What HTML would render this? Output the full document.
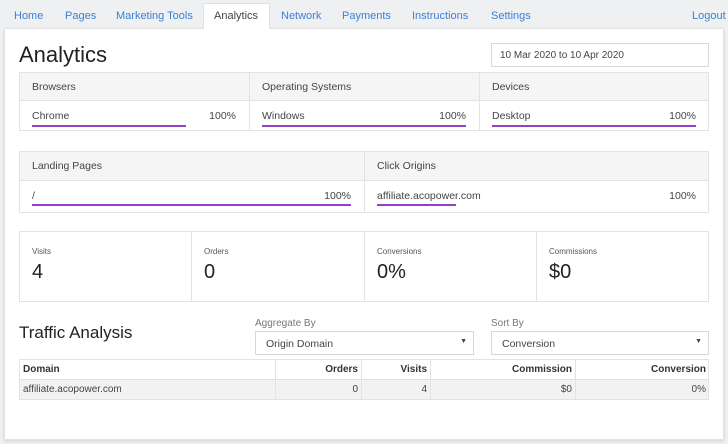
<!DOCTYPE html>
<html><head><style>
*{box-sizing:border-box;margin:0;padding:0}
body{width:728px;height:444px;background:#eef0f2;font-family:"Liberation Sans",sans-serif;color:#333;position:relative;overflow:hidden;font-size:11px}
.a{position:absolute}
.nav{color:#3d7fd6;font-size:11px;top:10px}
.card{left:4px;top:28px;width:720px;height:412px;background:#fff;border:1px solid #e2e2e2;box-shadow:0 1px 3px rgba(0,0,0,.12)}
.box{border:1px solid #e3e3e3;background:#fff}
.hd{background:#f5f5f5;border-bottom:1px solid #e3e3e3}
.vl{width:1px;background:#e3e3e3}
.bar{height:2px;background:#9640c9}
.t{font-size:10.5px;color:#444}
.sl{font-size:8px;color:#555}
.big{font-size:20px;color:#222}
.sel{border:1px solid #d8d8d8;background:#fff;font-size:10.5px;color:#444;padding:6px 10px}
.th{font-weight:bold;font-size:10px;color:#333}
.tr{text-align:right}
</style></head><body>
<div class="a" style="left:203px;top:3px;width:67px;height:26px;background:#fff;border:1px solid #e2e2e2;border-bottom:none;z-index:2"></div>
<div class="a nav" style="left:14px">Home</div>
<div class="a nav" style="left:65px">Pages</div>
<div class="a nav" style="left:116px">Marketing Tools</div>
<div class="a nav" style="left:214px;color:#444;z-index:3">Analytics</div>
<div class="a nav" style="left:281px">Network</div>
<div class="a nav" style="left:342px">Payments</div>
<div class="a nav" style="left:412px">Instructions</div>
<div class="a nav" style="left:491px">Settings</div>
<div class="a nav" style="left:692px">Logout</div>
<div class="a card"></div>
<div class="a" style="left:19px;top:42px;font-size:22px;color:#222">Analytics</div>
<div class="a sel" style="left:491px;top:43px;width:218px;height:24px;padding:6px 8px;font-size:10px">10 Mar 2020 to 10 Apr 2020</div>

<div class="a box" style="left:19px;top:72px;width:690px;height:59px"></div>
<div class="a hd" style="left:20px;top:73px;width:688px;height:28px"></div>
<div class="a vl" style="left:249px;top:73px;height:57px"></div>
<div class="a vl" style="left:479px;top:73px;height:57px"></div>
<div class="a t" style="left:32px;top:81px">Browsers</div>
<div class="a t" style="left:262px;top:81px">Operating Systems</div>
<div class="a t" style="left:492px;top:81px">Devices</div>
<div class="a t" style="left:32px;top:110px">Chrome</div><div class="a t tr" style="left:186px;width:50px;top:110px">100%</div>
<div class="a t" style="left:262px;top:110px">Windows</div><div class="a t tr" style="left:416px;width:50px;top:110px">100%</div>
<div class="a t" style="left:492px;top:110px">Desktop</div><div class="a t tr" style="left:646px;width:50px;top:110px">100%</div>
<div class="a bar" style="left:32px;top:125px;width:154px"></div>
<div class="a bar" style="left:262px;top:125px;width:204px"></div>
<div class="a bar" style="left:492px;top:125px;width:204px"></div>

<div class="a box" style="left:19px;top:151px;width:690px;height:62px"></div>
<div class="a hd" style="left:20px;top:152px;width:688px;height:29px"></div>
<div class="a vl" style="left:364px;top:152px;height:60px"></div>
<div class="a t" style="left:32px;top:160px">Landing Pages</div>
<div class="a t" style="left:377px;top:160px">Click Origins</div>
<div class="a t" style="left:32px;top:190px">/</div><div class="a t tr" style="left:301px;width:50px;top:190px">100%</div>
<div class="a t" style="left:377px;top:190px">affiliate.acopower.com</div><div class="a t tr" style="left:646px;width:50px;top:190px">100%</div>
<div class="a bar" style="left:32px;top:204px;width:319px"></div>
<div class="a bar" style="left:377px;top:204px;width:79px"></div>

<div class="a box" style="left:19px;top:231px;width:690px;height:71px"></div>
<div class="a vl" style="left:191px;top:232px;height:69px"></div>
<div class="a vl" style="left:364px;top:232px;height:69px"></div>
<div class="a vl" style="left:536px;top:232px;height:69px"></div>
<div class="a sl" style="left:32px;top:247px">Visits</div><div class="a big" style="left:32px;top:261px">4</div>
<div class="a sl" style="left:204px;top:247px">Orders</div><div class="a big" style="left:204px;top:261px">0</div>
<div class="a sl" style="left:377px;top:247px">Conversions</div><div class="a big" style="left:377px;top:261px">0%</div>
<div class="a sl" style="left:549px;top:247px">Commissions</div><div class="a big" style="left:549px;top:261px">$0</div>

<div class="a" style="left:19px;top:323px;font-size:17px;color:#222">Traffic Analysis</div>
<div class="a" style="left:255px;top:318px;font-size:10px;color:#777">Aggregate By</div>
<div class="a sel" style="left:255px;top:331px;width:219px;height:24px">Origin Domain<span style="position:absolute;right:6px;top:6px;font-size:7px">▼</span></div>
<div class="a" style="left:491px;top:318px;font-size:10px;color:#777">Sort By</div>
<div class="a sel" style="left:491px;top:331px;width:218px;height:24px">Conversion<span style="position:absolute;right:6px;top:6px;font-size:7px">▼</span></div>

<div class="a" style="left:19px;top:359px;width:690px;height:41px;border:1px solid #e3e3e3"></div>
<div class="a" style="left:20px;top:379px;width:688px;height:20px;background:#f2f2f2;border-top:1px solid #e0e0e0"></div>
<div class="a vl" style="left:275px;top:360px;height:39px"></div>
<div class="a vl" style="left:361px;top:360px;height:39px"></div>
<div class="a vl" style="left:430px;top:360px;height:39px"></div>
<div class="a vl" style="left:575px;top:360px;height:39px"></div>
<div class="a th" style="left:23px;top:364px">Domain</div>
<div class="a th tr" style="left:276px;width:82px;top:364px">Orders</div>
<div class="a th tr" style="left:362px;width:65px;top:364px">Visits</div>
<div class="a th tr" style="left:431px;width:141px;top:364px">Commission</div>
<div class="a th tr" style="left:576px;width:130px;top:364px">Conversion</div>
<div class="a t" style="left:23px;top:384px;font-size:10px">affiliate.acopower.com</div>
<div class="a t tr" style="left:276px;width:82px;top:384px;font-size:10px">0</div>
<div class="a t tr" style="left:362px;width:65px;top:384px;font-size:10px">4</div>
<div class="a t tr" style="left:431px;width:141px;top:384px;font-size:10px">$0</div>
<div class="a t tr" style="left:576px;width:130px;top:384px;font-size:10px">0%</div>
</body></html>
